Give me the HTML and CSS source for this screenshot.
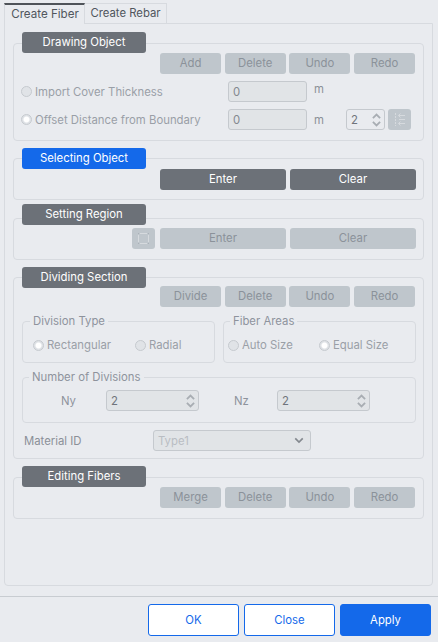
FILE: index.html
```html
<!DOCTYPE html>
<html lang="en">
<head>
<meta charset="UTF-8">
<meta name="viewport" content="width=device-width, initial-scale=1.0">
<title>Create Fiber</title>
<link rel="stylesheet" href="styles.css">
</head>
<body>

<div class="dialog">

  <div class="tabs">
    <div class="tab tab-active">Create Fiber</div>
    <div class="tab">Create Rebar</div>
  </div>

  <div class="panel">

    <!-- Drawing Object -->
    <section class="group group-drawing">
      <h3 class="group-title">Drawing Object</h3>
      <div class="group-box">
        <div class="btn-row btn-row-four">
          <button class="btn" disabled>Add</button>
          <button class="btn" disabled>Delete</button>
          <button class="btn" disabled>Undo</button>
          <button class="btn" disabled>Redo</button>
        </div>
        <div class="form-row">
          <label class="radio-label radio-wide"><input type="radio" name="draw" disabled>Import Cover Thickness</label>
          <input class="field" type="text" value="0" disabled>
          <span class="unit unit-raised">m</span>
        </div>
        <div class="form-row">
          <label class="radio-label radio-wide"><input type="radio" name="draw" checked disabled>Offset Distance from Boundary</label>
          <input class="field" type="text" value="0" disabled>
          <span class="unit">m</span>
          <div class="spin spin-small">
            <span>2</span>
            <svg class="spin-arrows" viewBox="0 0 10 16"><path d="M1 6l4-4 4 4M1 10l4 4 4-4"/></svg>
          </div>
          <button class="icon-btn" disabled>
            <svg viewBox="0 0 15 15"><path class="dash" d="M3.5 1v13"/><path d="M13 3.5H6.5M8.5 1.5l-2 2 2 2M13 7.5H7M13 11.5H6.5M8.5 9.5l-2 2 2 2"/></svg>
          </button>
        </div>
      </div>
    </section>

    <!-- Selecting Object -->
    <section class="group group-selecting">
      <h3 class="group-title title-active">Selecting Object</h3>
      <div class="group-box">
        <div class="btn-row">
          <button class="btn btn-wide btn-dark">Enter</button>
          <button class="btn btn-wide btn-dark">Clear</button>
        </div>
      </div>
    </section>

    <!-- Setting Region -->
    <section class="group group-region">
      <h3 class="group-title">Setting Region</h3>
      <div class="group-box">
        <div class="btn-row">
          <button class="icon-btn" disabled>
            <svg viewBox="0 0 15 15"><path d="M4 2.5h7M4 12.5h7M2.5 4v7M12.5 4v7"/><path class="corners" d="M2 2h1v1H2zM12 2h1v1h-1zM2 12h1v1H2zM12 12h1v1h-1z"/></svg>
          </button>
          <button class="btn btn-wide" disabled>Enter</button>
          <button class="btn btn-wide" disabled>Clear</button>
        </div>
      </div>
    </section>

    <!-- Dividing Section -->
    <section class="group group-dividing">
      <h3 class="group-title">Dividing Section</h3>
      <div class="group-box">
        <div class="btn-row btn-row-four">
          <button class="btn" disabled>Divide</button>
          <button class="btn" disabled>Delete</button>
          <button class="btn" disabled>Undo</button>
          <button class="btn" disabled>Redo</button>
        </div>

        <div class="option-sets">
          <fieldset class="subgroup">
            <legend>Division Type</legend>
            <div class="radio-set">
              <label class="radio-label radio-rect"><input type="radio" name="division" checked disabled>Rectangular</label>
              <label class="radio-label"><input type="radio" name="division" disabled>Radial</label>
            </div>
          </fieldset>
          <fieldset class="subgroup subgroup-areas">
            <legend>Fiber Areas</legend>
            <div class="radio-set">
              <label class="radio-label radio-auto"><input type="radio" name="areas" disabled>Auto Size</label>
              <label class="radio-label"><input type="radio" name="areas" checked disabled>Equal Size</label>
            </div>
          </fieldset>
        </div>

        <fieldset class="subgroup subgroup-count">
          <legend>Number of Divisions</legend>
          <div class="count-row">
            <span class="count-label">Ny</span>
            <div class="spin">
              <span>2</span>
              <svg class="spin-arrows" viewBox="0 0 10 16"><path d="M1 6l4-4 4 4M1 10l4 4 4-4"/></svg>
            </div>
            <span class="count-label count-label-z">Nz</span>
            <div class="spin">
              <span>2</span>
              <svg class="spin-arrows" viewBox="0 0 10 16"><path d="M1 6l4-4 4 4M1 10l4 4 4-4"/></svg>
            </div>
          </div>
        </fieldset>

        <div class="material-row">
          <span class="material-label">Material ID</span>
          <div class="select-box">
            <span>Type1</span>
            <svg viewBox="0 0 12 8"><path d="M1.5 1.5L6 6l4.5-4.5"/></svg>
          </div>
        </div>
      </div>
    </section>

    <!-- Editing Fibers -->
    <section class="group group-editing">
      <h3 class="group-title">Editing Fibers</h3>
      <div class="group-box">
        <div class="btn-row btn-row-four">
          <button class="btn" disabled>Merge</button>
          <button class="btn" disabled>Delete</button>
          <button class="btn" disabled>Undo</button>
          <button class="btn" disabled>Redo</button>
        </div>
      </div>
    </section>

  </div>

  <div class="footer">
    <button class="footer-btn">OK</button>
    <button class="footer-btn">Close</button>
    <button class="footer-btn footer-btn-primary">Apply</button>
  </div>

</div>

</body>
</html>
```

FILE: styles.css
```css
/* --- Basic Setup --- */
* {
  box-sizing: border-box;
}

body {
  margin: 0;
  background-color: #e9ebef;
  font-family: Inter, "Liberation Sans", sans-serif;
  font-size: 11.33px;
  color: #9a9fa7;
}

button,
input {
  font-family: inherit;
  font-size: 11.33px;
}

.dialog {
  display: flex;
  flex-direction: column;
  height: 642px;
  overflow: hidden;
}

/* --- Tabs --- */
.tabs {
  display: flex;
  margin: 3px 0 0 4px;
  height: 20px;
}

.tab {
  width: 82px;
  height: 21px;
  padding-top: 1px;
  border: 1px solid #d7dadf;
  border-left: 0;
  text-align: center;
  line-height: 16px;
  color: #50565d;
}

.tab-active {
  position: relative;
  z-index: 1;
  width: 81px;
  padding: 1px 0 0 1px;
  border-top: 2px solid #4f5359;
  border-left: 1px solid #d7dadf;
  border-bottom: 0;
  background-color: #e9ebef;
  font-size: 11.6px;
}

/* --- Main Panel --- */
.panel {
  width: 429px;
  height: 563px;
  margin-left: 4px;
  padding: 8px 8px 0;
  border: 1px solid #d7dadf;
  border-radius: 0 0 4px 4px;
}

/* --- Groups --- */
.group-title {
  position: relative;
  z-index: 1;
  width: 124px;
  height: 21px;
  margin: 0 0 0 9px;
  border-radius: 3px;
  background-color: #6c7178;
  color: #fff;
  font-size: 11.33px;
  font-weight: 400;
  line-height: 21px;
  text-align: center;
}

.title-active {
  background-color: #1469ea;
}

.group-box {
  margin-top: -10px;
  padding: 9px 7px 0 7px;
  border: 1px solid #d7dadf;
  border-radius: 4px;
}

.group-drawing .group-box {
  height: 98px;
}

.group-selecting {
  margin-top: 7px;
}

.group-selecting .group-box {
  height: 42px;
  margin-top: -11px;
  padding-top: 10px;
}

.group-region {
  margin-top: 4px;
}

.group-region .group-box {
  height: 42px;
  margin-top: -7px;
  padding-top: 9px;
}

.group-dividing {
  margin-top: 7px;
}

.group-dividing .group-box {
  height: 182px;
  margin-top: -11px;
  padding: 8px 7px 0 8px;
}

.group-editing {
  margin-top: 7px;
}

.group-editing .group-box {
  height: 42px;
}

/* --- Buttons --- */
.btn-row {
  display: flex;
  justify-content: flex-end;
  gap: 4px;
}

.btn-row-four {
  gap: 3.67px;
  padding-right: 1px;
}

.btn {
  width: 61px;
  height: 21px;
  padding: 0 0 1px;
  border: 0;
  border-radius: 3px;
  background-color: #bfc6cc;
  color: #8b929a;
}

.btn-wide {
  width: 126px;
}

.btn-dark {
  background-color: #6c7178;
  color: #fff;
}

.icon-btn {
  display: flex;
  align-items: center;
  justify-content: center;
  width: 23px;
  height: 21px;
  padding: 0;
  border: 0;
  border-radius: 3px;
  background-color: #bfc6cc;
}

.group-region .icon-btn {
  margin-right: 1px;
}

.icon-btn svg {
  width: 15px;
  height: 15px;
  fill: none;
  stroke: #d6dade;
  stroke-width: 1;
}

.icon-btn .dash {
  stroke-dasharray: 2 1;
}

.icon-btn .corners {
  fill: #a9b0b7;
  stroke: none;
}

/* --- Form Rows --- */
.form-row {
  display: flex;
  align-items: center;
  height: 21px;
  margin-top: 7px;
}

.radio-label {
  display: flex;
  align-items: center;
  white-space: nowrap;
}

.radio-label input {
  appearance: none;
  width: 11px;
  height: 11px;
  margin: 0 3px 0 0;
  border: 1px solid #c6cacf;
  border-radius: 50%;
  background-color: #e0e3e7;
}

.radio-label input:checked {
  background: radial-gradient(circle, #fff 0 2.5px, #dfe2e6 3.5px);
}

.radio-wide {
  width: 207px;
}

.field {
  width: 79px;
  height: 21px;
  padding: 0 4px;
  border: 1px solid #c5c9ce;
  border-radius: 3px;
  background-color: #e1e4e7;
  color: #83888f;
}

.unit {
  width: 32px;
  margin-left: 7px;
  color: #8b9098;
}

.unit-raised {
  margin-top: -5px;
}

/* --- Spin Boxes --- */
.spin {
  display: flex;
  align-items: center;
  justify-content: space-between;
  width: 93px;
  height: 21px;
  padding: 0 3px 0 4px;
  border: 1px solid #c5c9ce;
  border-radius: 3px;
  background-color: #e1e4e7;
  color: #6f747b;
}

.spin-small {
  width: 39px;
  margin-right: 3px;
  background-color: #e9ebef;
}

.spin-arrows {
  width: 9px;
  height: 16px;
  fill: none;
  stroke: #a8adb3;
  stroke-width: 2;
}

/* --- Dividing Section Sets --- */
.option-sets {
  display: flex;
  gap: 8px;
  margin-top: 6px;
}

.subgroup {
  width: 193px;
  min-width: 0;
  height: 50px;
  margin: 0;
  padding: 0;
  border: 1px solid #d7dadf;
  border-radius: 4px;
}

.subgroup legend {
  margin-left: 7px;
  padding: 0 3px;
  line-height: 16px;
  color: #8e939d;
}

.subgroup-areas legend {
  margin-left: 6px;
}

.radio-set {
  display: flex;
  height: 16px;
  margin: 8px 0 0 10px;
}

.subgroup-areas .radio-set {
  margin-left: 4px;
}

.radio-rect {
  width: 102px;
}

.radio-auto {
  width: 91px;
}

.subgroup-count {
  width: 394px;
  height: 54px;
  margin-top: 6px;
}

.subgroup-count legend {
  margin-left: 6px;
}

.count-row {
  display: flex;
  align-items: center;
  margin-top: 5px;
}

.count-label {
  width: 45px;
  margin-left: 38px;
  color: #8e939d;
}

.count-label-z {
  margin-left: 35px;
  width: 43px;
}

/* --- Material Row --- */
.material-row {
  display: flex;
  align-items: center;
  margin-top: 7px;
  padding-left: 2px;
}

.material-label {
  width: 129px;
  color: #8b9098;
}

.select-box {
  display: flex;
  align-items: center;
  justify-content: space-between;
  width: 158px;
  height: 21px;
  padding: 0 6px 0 4px;
  border: 1px solid #c5c9ce;
  border-radius: 3px;
  background-color: #e1e4e7;
  color: #b9bdc3;
}

.select-box svg {
  width: 10px;
  height: 7px;
  fill: none;
  stroke: #84898f;
  stroke-width: 2;
}

/* --- Footer --- */
.footer {
  display: flex;
  justify-content: flex-end;
  gap: 5px;
  margin-top: 10px;
  padding: 7px 7px 0 0;
  border-top: 1px solid #c8ccd1;
}

.footer-btn {
  width: 91px;
  height: 32px;
  padding: 0;
  border: 1px solid #1469ea;
  border-radius: 3px;
  background-color: #fff;
  color: #1469ea;
}

.footer-btn-primary {
  background-color: #1469ea;
  color: #fff;
}
```
